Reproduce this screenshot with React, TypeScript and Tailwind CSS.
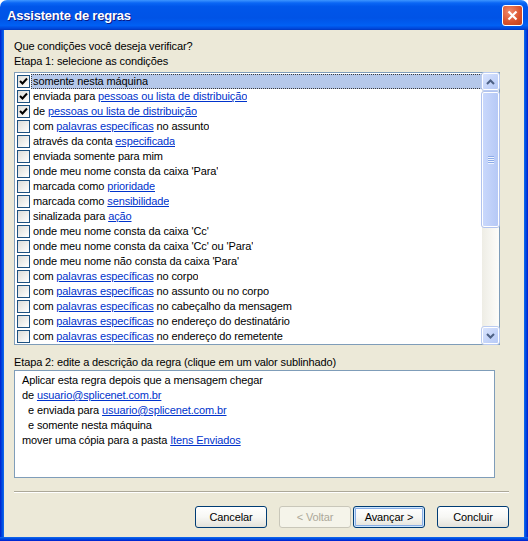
import React from 'react'

type Part = string | { link: string }

const ROWS: { checked?: boolean; parts: Part[] }[] = [
  { checked: true, parts: ['somente nesta máquina'] },
  { checked: true, parts: ['enviada para ', { link: 'pessoas ou lista de distribuição' }] },
  { checked: true, parts: ['de ', { link: 'pessoas ou lista de distribuição' }] },
  { parts: ['com ', { link: 'palavras específicas' }, ' no assunto'] },
  { parts: ['através da conta ', { link: 'especificada' }] },
  { parts: ['enviada somente para mim'] },
  { parts: ["onde meu nome consta da caixa 'Para'"] },
  { parts: ['marcada como ', { link: 'prioridade' }] },
  { parts: ['marcada como ', { link: 'sensibilidade' }] },
  { parts: ['sinalizada para ', { link: 'ação' }] },
  { parts: ["onde meu nome consta da caixa 'Cc'"] },
  { parts: ["onde meu nome consta da caixa 'Cc' ou 'Para'"] },
  { parts: ["onde meu nome não consta da caixa 'Para'"] },
  { parts: ['com ', { link: 'palavras específicas' }, ' no corpo'] },
  { parts: ['com ', { link: 'palavras específicas' }, ' no assunto ou no corpo'] },
  { parts: ['com ', { link: 'palavras específicas' }, ' no cabeçalho da mensagem'] },
  { parts: ['com ', { link: 'palavras específicas' }, ' no endereço do destinatário'] },
  { parts: ['com ', { link: 'palavras específicas' }, ' no endereço do remetente'] },
]

function Text({ parts }: { parts: Part[] }) {
  return (
    <>
      {parts.map((p, i) =>
        typeof p === 'string' ? (
          <span key={i} className="whitespace-pre">{p}</span>
        ) : (
          <span key={i} className="whitespace-pre text-[#0033CC] underline underline-offset-[1px]">
            {p.link}
          </span>
        ),
      )}
    </>
  )
}

function Checkbox({ checked }: { checked?: boolean }) {
  return (
    <span className="flex h-[13px] w-[13px] shrink-0 items-center justify-center border border-[#1C5180] bg-gradient-to-br from-[#DCDCD7] to-white">
      {checked && (
        <svg width="11" height="11" viewBox="0 0 11 11">
          <path d="M2 5 L4.5 7.5 L9 2.5" fill="none" stroke="#000" strokeWidth="2" />
        </svg>
      )}
    </span>
  )
}

function ScrollArrow({ down }: { down?: boolean }) {
  return (
    <div className="flex h-[17px] w-[17px] items-center justify-center rounded-[2px] border border-white bg-gradient-to-br from-[#D8E3FD] to-[#B6C9F6] outline outline-1 outline-[#BACBF1]">
      <svg width="9" height="6" viewBox="0 0 9 6">
        <path
          d={down ? 'M1 1 L4.5 4.5 L8 1' : 'M1 5 L4.5 1.5 L8 5'}
          fill="none"
          stroke="#4D6185"
          strokeWidth="2"
        />
      </svg>
    </div>
  )
}

function Scrollbar() {
  return (
    <div className="flex w-[17px] shrink-0 flex-col bg-gradient-to-r from-[#EEEDE5] to-[#FDFDFA]">
      <ScrollArrow />
      <div className="mt-[2px] flex h-[135px] w-[17px] flex-col items-center justify-center gap-[1px] rounded-[2px] border border-white bg-gradient-to-r from-[#C9D8FC] to-[#B6C9F6] outline outline-1 outline-[#B1C3EE]">
        {[0, 1, 2, 3].map((i) => (
          <span key={i} className="h-[1px] w-[6px] bg-[#8CAAE8] shadow-[0_1px_0_#EEF4FE]" />
        ))}
      </div>
      <div className="flex-1" />
      <ScrollArrow down />
    </div>
  )
}

function Button({ label, disabled, focused }: { label: string; disabled?: boolean; focused?: boolean }) {
  return (
    <button
      type="button"
      className={`flex h-[22px] w-[72px] items-center justify-center rounded-[3px] border ${
        disabled
          ? 'border-[#C9C7BA] bg-[#F5F4EA] text-[#ACA899]'
          : 'border-[#003C74] bg-gradient-to-b from-white via-[#F7F7F4] to-[#E3E2DA] text-black'
      } ${focused ? 'shadow-[inset_0_0_0_1px_#CEE7FF,inset_0_0_0_2px_#89ADE4]' : ''}`}
    >
      {label}
    </button>
  )
}

export default function App() {
  return (
    <div className="flex h-[541px] w-[528px] flex-col bg-white font-['Liberation_Sans',sans-serif] text-[11px] leading-[15px] tracking-[-0.12px] text-black">
      <div className="flex h-[30px] shrink-0 items-center rounded-t-[7px] bg-[linear-gradient(to_bottom,#3D95FF_0%,#0A66F5_10%,#0056EA_22%,#0053E6_60%,#0060F4_85%,#0047DA_95%,#0036BE_100%)] pl-[7px] pr-[5px]">
        <span className="flex-1 text-[13px] font-bold tracking-[-0.2px] text-white [text-shadow:1px_1px_0_#0A1883]">
          Assistente de regras
        </span>
        <span className="flex h-[21px] w-[21px] items-center justify-center rounded-[3px] border border-white bg-[radial-gradient(circle_at_35%_30%,#F08A6C,#D9512B_60%,#C0401B)]">
          <svg width="11" height="11" viewBox="0 0 11 11">
            <path d="M1.5 1.5 L9.5 9.5 M9.5 1.5 L1.5 9.5" stroke="#fff" strokeWidth="2.2" />
          </svg>
        </span>
      </div>

      <div className="flex flex-1">
        <div className="w-[4px] bg-gradient-to-r from-[#0019CF] to-[#166AEE]" />
        <div className="flex flex-1 flex-col bg-[#ECE9D8] pl-[10px] pr-[15px] pt-[9px]">
          <div>Que condições você deseja verificar?</div>
          <div>Etapa 1: selecione as condições</div>

          <div className="mt-[3px] flex h-[273px] w-[486px] border border-[#7F9DB9] bg-white">
            <div className="flex flex-1 flex-col pt-[1px]">
              {ROWS.map((r, i) => (
                <div key={i} className="flex h-[15px] items-center pl-[2px]">
                  <Checkbox checked={r.checked} />
                  <span
                    className={`ml-[1px] flex h-[15px] flex-1 items-center border px-[1px] ${
                      i === 0 ? 'border-dotted border-[#3A3A3A] bg-[#B5C8EA]' : 'border-transparent'
                    }`}
                  >
                    <span className="truncate">
                      <Text parts={r.parts} />
                    </span>
                  </span>
                </div>
              ))}
            </div>
            <Scrollbar />
          </div>

          <div className="mt-[10px]">Etapa 2: edite a descrição da regra (clique em um valor sublinhado)</div>
          <div className="flex h-[108px] w-[481px] flex-col border border-[#7F9DB9] bg-white pl-[7px] pt-[2px]">
            <div>Aplicar esta regra depois que a mensagem chegar</div>
            <div>
              <Text parts={['de ', { link: 'usuario@splicenet.com.br' }]} />
            </div>
            <div className="pl-[6px]">
              <Text parts={['e enviada para ', { link: 'usuario@splicenet.com.br' }]} />
            </div>
            <div className="pl-[6px]">e somente nesta máquina</div>
            <div>
              <Text parts={['mover uma cópia para a pasta ', { link: 'Itens Enviados' }]} />
            </div>
          </div>

          <div className="mt-[13px] h-[2px] border-b border-t border-b-white border-t-[#ACA899]" />

          <div className="mt-[13px] flex justify-end">
            <Button label="Cancelar" />
            <div className="w-[12px]" />
            <Button label="< Voltar" disabled />
            <div className="w-[2px]" />
            <Button label="Avançar >" focused />
            <div className="w-[12px]" />
            <Button label="Concluir" />
          </div>
        </div>
        <div className="w-[4px] bg-gradient-to-r from-[#166AEE] to-[#0019CF]" />
      </div>
      <div className="h-[4px] shrink-0 bg-gradient-to-b from-[#166AEE] to-[#0019CF]" />
    </div>
  )
}
